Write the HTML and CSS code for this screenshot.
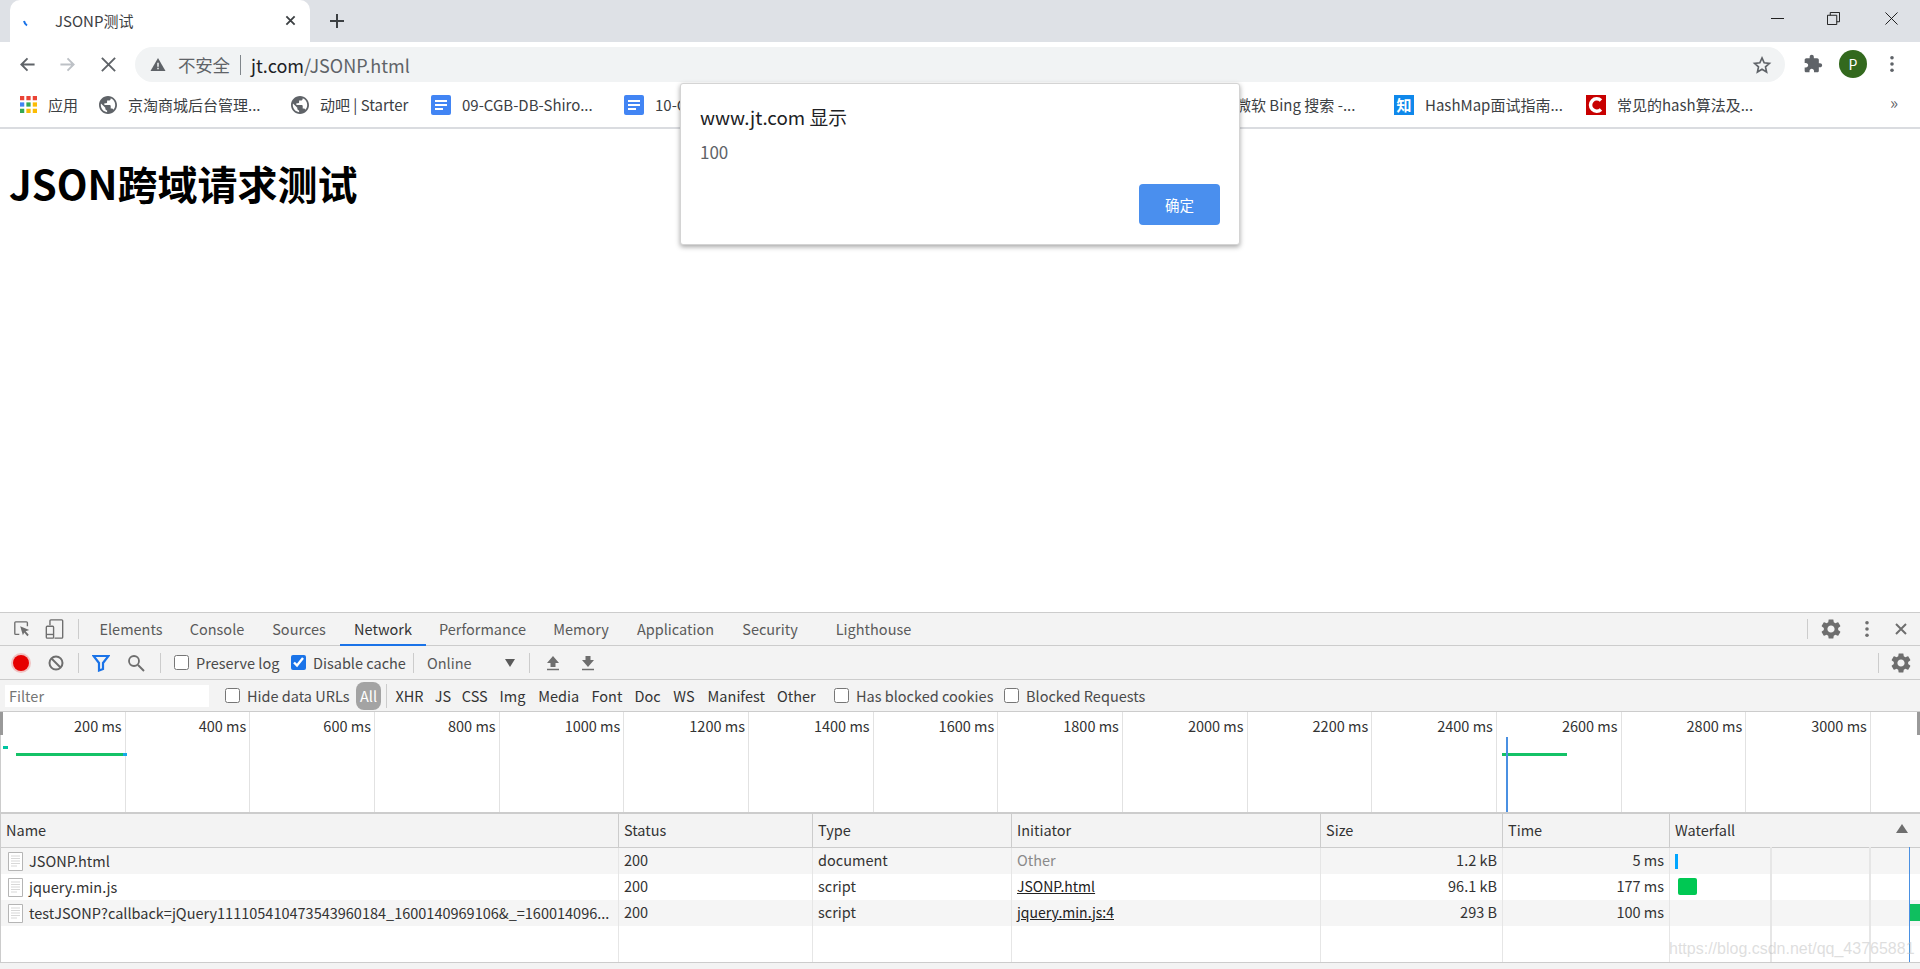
FILE: index.html
```html
<!DOCTYPE html>
<html lang="zh-CN">
<head>
<meta charset="utf-8">
<title>JSONP测试</title>
<link rel="stylesheet" href="styles.css">
</head>
<body>
<div class="browser">
  <header class="tabstrip">
    <div class="tab">
      <svg class="spinner" viewBox="0 0 8 8"><path d="M1 1 C1.5 3 2.5 4.5 4 5.5" fill="none" stroke="#1a73e8" stroke-width="2"/></svg>
      <span class="tab-title">JSONP测试</span>
      <svg class="tab-close" viewBox="0 0 12 12"><path d="M1.5 1.5l9 9M10.5 1.5l-9 9" stroke="#3c4043" stroke-width="2"/></svg>
    </div>
    <svg class="new-tab" viewBox="0 0 16 16"><path d="M8 1v14M1 8h14" stroke="#3c4043" stroke-width="2"/></svg>
    <div class="win-controls">
      <svg class="win win-min" viewBox="0 0 14 14"><path d="M0 7h14" stroke="#111" stroke-width="1"/></svg>
      <svg class="win win-max" viewBox="0 0 14 14"><path d="M.5 3.5h10v10H.5zM3.5 3.5V.5h10v10h-3" fill="none" stroke="#111" stroke-width="1"/></svg>
      <svg class="win win-close" viewBox="0 0 14 14"><path d="M.5.5l13 13M13.500.5l-13 13" stroke="#111" stroke-width="1"/></svg>
    </div>
  </header>

  <div class="toolbar">
    <svg class="nav nav-back" viewBox="0 0 18 18"><path d="M16.500 9H3M9 2.500L2.500 9 9 15.500" fill="none" stroke="#5f6368" stroke-width="2"/></svg>
    <svg class="nav nav-fwd" viewBox="0 0 18 18"><path d="M1.500 9H15M9 2.500L15.500 9 9 15.500" fill="none" stroke="#bdc1c6" stroke-width="2"/></svg>
    <svg class="nav nav-stop" viewBox="0 0 18 18"><path d="M2 2l14 14M16 2L2 16" stroke="#5f6368" stroke-width="2"/></svg>
    <div class="omnibox">
      <svg class="warn" viewBox="0 0 16 16"><path d="M8 1L16 15H0z" fill="#5f6368"/><path d="M7.200 6h1.600v4.500H7.200zM7.200 11.500h1.600V13H7.200z" fill="#f1f3f4"/></svg>
      <span class="insecure">不安全</span>
      <span class="omni-sep"></span>
      <span class="url"><span class="url-host">jt.com</span>/JSONP.html</span>
      <svg class="star" viewBox="0 0 24 24"><path d="M12 3.500l2.600 5.800 6.300.7-4.700 4.200 1.300 6.200L12 17.200l-5.500 3.200 1.300-6.200L3.100 10l6.300-.7z" fill="none" stroke="#5f6368" stroke-width="2"/></svg>
    </div>
    <svg class="puzzle" viewBox="0 0 24 24"><path fill="#5f6368" d="M20.500 11H19V7c0-1.100-.9-2-2-2h-4V3.500C13 2.120 11.880 1 10.500 1S8 2.120 8 3.500V5H4c-1.100 0-1.990.9-1.990 2v3.800H3.500c1.490 0 2.700 1.210 2.700 2.700s-1.210 2.700-2.700 2.700H2V20c0 1.100.9 2 2 2h3.800v-1.500c0-1.490 1.210-2.700 2.700-2.700 1.490 0 2.700 1.210 2.700 2.700V22H17c1.100 0 2-.9 2-2v-4h1.500c1.380 0 2.500-1.120 2.500-2.500S21.880 11 20.500 11z"/></svg>
    <span class="avatar">P</span>
    <svg class="menu-dots" viewBox="0 0 6 20"><circle cx="3" cy="3" r="2" fill="#5f6368"/><circle cx="3" cy="10" r="2" fill="#5f6368"/><circle cx="3" cy="17" r="2" fill="#5f6368"/></svg>
  </div>

  <nav class="bookmarks">
    <div class="bm bm-apps">
      <svg class="bm-icon" viewBox="0 0 16 16">
        <g fill="#ea4335"><rect width="4" height="4"/><rect x="6" width="4" height="4"/><rect x="12" width="4" height="4"/></g>
        <g><rect y="6" width="4" height="4" fill="#4285f4"/><rect x="6" y="6" width="4" height="4" fill="#34a853"/><rect x="12" y="6" width="4" height="4" fill="#fbbc05"/></g>
        <g><rect y="12" width="4" height="4" fill="#34a853"/><rect x="6" y="12" width="4" height="4" fill="#fbbc05"/><rect x="12" y="12" width="4" height="4" fill="#fbbc05"/></g>
      </svg><span>应用</span>
    </div>
    <div class="bm bm-jt"><svg class="bm-icon" viewBox="2 2 20 20"><use href="#globe"/></svg><span>京淘商城后台管理...</span></div>
    <div class="bm bm-dong"><svg class="bm-icon" viewBox="2 2 20 20"><use href="#globe"/></svg><span>动吧 | Starter</span></div>
    <div class="bm bm-doc1"><svg class="bm-icon" viewBox="0 0 20 20"><use href="#docs"/></svg><span>09-CGB-DB-Shiro...</span></div>
    <div class="bm bm-doc2"><svg class="bm-icon" viewBox="0 0 20 20"><use href="#docs"/></svg><span>10-CGB-DB-Shiro...</span></div>
    <div class="bm bm-bing"><svg class="bm-icon" viewBox="2 2 20 20"><use href="#globe"/></svg><span>微软 Bing 搜索 -...</span></div>
    <div class="bm bm-zhi"><span class="zhi">知</span><span>HashMap面试指南...</span></div>
    <div class="bm bm-c"><svg class="bm-icon" viewBox="0 0 20 20"><rect width="20" height="20" fill="#c80000"/><path d="M15 5.500A6.200 6.200 0 1 0 15 14.500" fill="none" stroke="#fff" stroke-width="3.500"/></svg><span>常见的hash算法及...</span></div>
    <span class="bm-more">»</span>
  </nav>

  <main class="page">
    <h1>JSON跨域请求测试</h1>
  </main>

  <section class="devtools">
    <div class="dt-tabs">
      <svg class="dt-ic dt-inspect" viewBox="0 0 20 20"><path d="M7 16H3a1 1 0 0 1-1-1V3a1 1 0 0 1 1-1h12a1 1 0 0 1 1 1v4" fill="none" stroke="#6e6e6e" stroke-width="1.500"/><path d="M8 7l10 4-4 1.500 3.500 4-1.500 1.500-3.500-4L11 17z" fill="#6e6e6e"/></svg>
      <svg class="dt-ic dt-device" viewBox="0 0 20 22"><path d="M5 7V2a1 1 0 0 1 1-1h12a1 1 0 0 1 1 1v18a1 1 0 0 1-1 1H10" fill="none" stroke="#6e6e6e" stroke-width="1.500"/><rect x="1" y="8" width="8" height="13" rx="1" fill="none" stroke="#6e6e6e" stroke-width="1.500"/><path d="M1 17h8" stroke="#6e6e6e" stroke-width="1.500"/></svg>
      <span class="vsep vsep-tabs"></span>
      <span class="dt-tab t-elements">Elements</span>
      <span class="dt-tab t-console">Console</span>
      <span class="dt-tab t-sources">Sources</span>
      <span class="dt-tab t-network is-active">Network</span>
      <span class="dt-tab t-performance">Performance</span>
      <span class="dt-tab t-memory">Memory</span>
      <span class="dt-tab t-application">Application</span>
      <span class="dt-tab t-security">Security</span>
      <span class="dt-tab t-lighthouse">Lighthouse</span>
      <span class="vsep vsep-right"></span>
      <svg class="dt-ic dt-gear" viewBox="2 2 20 20"><use href="#gear"/></svg>
      <svg class="dt-ic dt-more" viewBox="0 0 6 20"><circle cx="3" cy="3" r="2" fill="#6e6e6e"/><circle cx="3" cy="10" r="2" fill="#6e6e6e"/><circle cx="3" cy="17" r="2" fill="#6e6e6e"/></svg>
      <svg class="dt-ic dt-close" viewBox="0 0 12 12"><path d="M1 1l10 10M11 1L1 11" stroke="#6e6e6e" stroke-width="2"/></svg>
    </div>

    <div class="dt-toolbar">
      <span class="tool tool-record"><span class="rec"></span></span>
      <svg class="dt-ic tool-clear" viewBox="0 0 16 16"><circle cx="8" cy="8" r="6.500" fill="none" stroke="#6e6e6e" stroke-width="2"/><path d="M3.500 3.500l9 9" stroke="#6e6e6e" stroke-width="2"/></svg>
      <span class="vsep vsep-a"></span>
      <svg class="dt-ic tool-filter" viewBox="0 0 18 18"><path d="M1.500 2h15L11 9v6l-4 1.500V9z" fill="none" stroke="#1a73e8" stroke-width="2.200"/></svg>
      <svg class="dt-ic tool-search" viewBox="0 0 18 18"><circle cx="7" cy="7" r="5" fill="none" stroke="#6e6e6e" stroke-width="1.800"/><path d="M11 11l6 6" stroke="#6e6e6e" stroke-width="2"/></svg>
      <span class="vsep vsep-b"></span>
      <label class="chk chk-preserve"><input type="checkbox">Preserve log</label>
      <label class="chk chk-cache"><input type="checkbox" checked>Disable cache</label>
      <span class="vsep vsep-c"></span>
      <span class="throttle">Online</span>
      <span class="caret"></span>
      <span class="vsep vsep-d"></span>
      <svg class="dt-ic tool-up" viewBox="0 0 14 16"><path d="M7 1l6 7H9.500v4h-5V8H1z" fill="#6e6e6e"/><path d="M1 14.500h12" stroke="#6e6e6e" stroke-width="1.500"/></svg>
      <svg class="dt-ic tool-down" viewBox="0 0 14 16"><path d="M7 12l6-7H9.500V1h-5v4H1z" fill="#6e6e6e"/><path d="M1 14.500h12" stroke="#6e6e6e" stroke-width="1.500"/></svg>
      <span class="vsep vsep-e"></span>
      <svg class="dt-ic tool-gear" viewBox="2 2 20 20"><use href="#gear"/></svg>
    </div>

    <div class="dt-filter">
      <input class="filter-input" type="text" placeholder="Filter">
      <label class="chk chk-hide"><input type="checkbox">Hide data URLs</label>
      <span class="pill">All</span>
      <span class="vsep vsep-f"></span>
      <div class="chips">
        <span>XHR</span><span>JS</span><span>CSS</span><span>Img</span><span>Media</span><span>Font</span><span>Doc</span><span>WS</span><span>Manifest</span><span>Other</span>
      </div>
      <label class="chk chk-cookies"><input type="checkbox">Has blocked cookies</label>
      <label class="chk chk-blocked"><input type="checkbox">Blocked Requests</label>
    </div>

    <div class="overview">
      <span>200 ms</span><span>400 ms</span><span>600 ms</span><span>800 ms</span><span>1000 ms</span><span>1200 ms</span><span>1400 ms</span><span>1600 ms</span><span>1800 ms</span><span>2000 ms</span><span>2200 ms</span><span>2400 ms</span><span>2600 ms</span><span>2800 ms</span><span>3000 ms</span>
      <i class="ov ov-grip-l"></i>
      <i class="ov ov-tick"></i>
      <i class="ov ov-line1"></i>
      <i class="ov ov-line1-end"></i>
      <i class="ov ov-line2"></i>
      <i class="ov ov-mark"></i>
      <i class="ov ov-grip-r"></i>
    </div>

    <div class="net">
      <div class="net-row net-head">
        <div>Name</div><div>Status</div><div>Type</div><div>Initiator</div><div>Size</div><div>Time</div>
        <div class="wf-head">Waterfall<span class="sort"></span></div>
      </div>
      <div class="net-row net-odd">
        <div class="name"><svg class="file" viewBox="0 0 15 19"><use href="#file"/></svg>JSONP.html</div><div>200</div><div>document</div><div class="muted">Other</div><div class="num">1.2 kB</div><div class="num">5 ms</div><div class="wf"><i class="bar bar-a"></i></div>
      </div>
      <div class="net-row">
        <div class="name"><svg class="file" viewBox="0 0 15 19"><use href="#file"/></svg>jquery.min.js</div><div>200</div><div>script</div><div class="link">JSONP.html</div><div class="num">96.1 kB</div><div class="num">177 ms</div><div class="wf"><i class="bar bar-b"></i></div>
      </div>
      <div class="net-row net-odd">
        <div class="name"><svg class="file" viewBox="0 0 15 19"><use href="#file"/></svg>testJSONP?callback=jQuery111105410473543960184_1600140969106&amp;_=160014096...</div><div>200</div><div>script</div><div class="link">jquery.min.js:4</div><div class="num">293 B</div><div class="num">100 ms</div><div class="wf"><i class="bar bar-c"></i></div>
      </div>
      <div class="net-row net-fill">
        <div></div><div></div><div></div><div></div><div></div><div></div><div class="wf"></div>
      </div>
      <i class="wf-line wf-line-1"></i>
      <i class="wf-line wf-line-2"></i>
      <i class="wf-line wf-line-dcl"></i>
      <span class="watermark">https://blog.csdn.net/qq_43765881</span>
    </div>
    <div class="dt-status"></div>
  </section>

  <div class="alert" role="alertdialog">
    <div class="alert-title">www.jt.com 显示</div>
    <div class="alert-msg">100</div>
    <div class="alert-actions"><button class="alert-ok" type="button">确定</button></div>
  </div>
</div>

<svg class="defs" aria-hidden="true">
  <defs>
    <path id="globe" fill="#5f6368" d="M12 2C6.480 2 2 6.480 2 12s4.480 10 10 10 10-4.480 10-10S17.520 2 12 2zm-1 17.930c-3.950-.49-7-3.850-7-7.930 0-.62.08-1.210.21-1.790L9 15v1c0 1.100.9 2 2 2v1.930zm6.900-2.540c-.26-.81-1-1.390-1.900-1.390h-1v-3c0-.55-.45-1-1-1H8v-2h2c.55 0 1-.45 1-1V7h2c1.100 0 2-.9 2-2v-.41c2.930 1.190 5 4.060 5 7.410 0 2.080-.8 3.970-2.100 5.390z"/>
    <g id="docs"><rect width="20" height="20" rx="2" fill="#4285f4"/><path d="M4 5h12v2H4zM4 9h12v2H4zM4 13h8v2H4z" fill="#fff"/></g>
    <path id="gear" fill="#6e6e6e" d="M19.140 12.940c.04-.3.06-.61.06-.94 0-.32-.02-.64-.07-.94l2.030-1.580c.18-.14.23-.41.12-.61l-1.920-3.320c-.12-.22-.37-.29-.59-.22l-2.390.96c-.5-.38-1.030-.7-1.620-.94l-.36-2.540c-.04-.24-.24-.41-.48-.41h-3.840c-.24 0-.43.17-.47.41l-.36 2.540c-.59.24-1.130.57-1.620.94l-2.390-.96c-.22-.08-.47 0-.59.22L2.740 8.870c-.12.21-.08.47.12.61l2.030 1.580c-.05.3-.09.63-.09.94s.02.64.07.94l-2.030 1.580c-.18.14-.23.41-.12.61l1.920 3.320c.12.22.37.29.59.22l2.390-.96c.5.38 1.030.7 1.620.94l.36 2.540c.05.24.24.41.48.41h3.840c.24 0 .44-.17.47-.41l.36-2.540c.59-.24 1.130-.56 1.620-.94l2.390.96c.22.08.47 0 .59-.22l1.920-3.320c.12-.22.07-.47-.12-.61l-2.010-1.580zM12 15.600c-1.980 0-3.600-1.620-3.600-3.600s1.620-3.600 3.600-3.600 3.600 1.620 3.600 3.600-1.620 3.600-3.600 3.600z"/>
    <g id="file"><path d="M.5.5h14v18H.5z" fill="#fff" stroke="#b5b5b5"/><path d="M3 4h9M3 6.500h9M3 9h9M3 11.500h9M3 14h6" stroke="#d8d8d8" stroke-width="1.200"/></g>
  </defs>
</svg>
</body>
</html>
```
FILE: styles.css
```css
* { box-sizing: border-box; }
html, body { margin: 0; padding: 0; height: 969px; overflow: hidden; background: #fff; }
body { font-family: "Noto Sans CJK SC", "Noto Sans", sans-serif; font-size: 15px; color: #303942; }
.defs { width: 0; height: 0; position: absolute; }
svg { display: block; flex: none; }

.browser { position: relative; display: flex; flex-direction: column; width: 1920px; height: 969px; }

/* Tab strip */
.tabstrip { flex: none; height: 42px; background: #dee1e6; display: flex; align-items: center; padding-left: 10px; }
.tab { width: 300px; height: 42px; align-self: flex-end; background: #fff; border-radius: 10px 10px 0 0; display: flex; align-items: center; padding-left: 13px; padding-bottom: 2px; }
.spinner { width: 8px; height: 8px; margin-top: 8px; }
.tab-title { margin-left: 24px; width: 230px; font-size: 15px; color: #3c4043; }
.tab-close { width: 11px; height: 11px; }
.new-tab { width: 16px; height: 16px; margin-left: 19px; }
.win-controls { margin-left: auto; display: flex; align-items: center; padding-right: 22px; padding-bottom: 6px; }
.win { width: 13px; height: 13px; }
.win-min { margin-right: 43px; }
.win-max { margin-right: 45px; }

/* Toolbar */
.toolbar { flex: none; height: 40px; display: flex; align-items: flex-start; padding: 5px 0 0 19px; }
.nav { width: 17px; height: 17px; margin-top: 9px; }
.nav-fwd { margin-left: 23px; }
.nav-stop { margin-left: 24px; }
.omnibox { margin-left: 18px; width: 1650px; height: 35px; background: #f1f3f4; border-radius: 18px; display: flex; align-items: center; padding-left: 15px; font-size: 18px; }
.warn { width: 16px; height: 15px; }
.insecure { margin-left: 12px; width: 56px; font-size: 17.500px; color: #5f6368; white-space: nowrap; letter-spacing: -.2px; }
.omni-sep { width: 1px; height: 20px; background: #80868b; margin-left: 6px; }
.url { margin-left: 10px; color: #5f6368; font-size: 18px; white-space: nowrap; }
.url-host { color: #202124; }
.star { width: 20px; height: 20px; margin-left: auto; margin-right: 13px; }
.puzzle { width: 20px; height: 20px; margin: 7px 0 0 18px; }
.avatar { width: 28px; height: 28px; margin: 3px 0 0 16px; border-radius: 50%; background: #33691e; color: #fff; font-size: 14px; display: flex; align-items: center; justify-content: center; }
.menu-dots { width: 6px; height: 18px; margin: 8px 0 0 22px; }

/* Bookmarks */
.bookmarks { flex: none; height: 47px; border-bottom: 2px solid #dadce0; display: flex; align-items: center; padding-left: 20px; font-size: 15px; color: #3c4043; white-space: nowrap; }
.bm { display: flex; align-items: center; gap: 11px; flex: none; }
.bm-icon { width: 20px; height: 20px; }
.bm-apps { width: 79px; }
.bm-apps .bm-icon { width: 17px; height: 17px; }
.bm-jt { width: 192px; }
.bm-jt .bm-icon, .bm-dong .bm-icon, .bm-bing .bm-icon { width: 18px; height: 18px; }
.bm-dong { width: 140px; }
.bm-doc1 { width: 193px; }
.bm-doc2 { width: 583px; }
.bm-bing { width: 187px; }
.bm-zhi { width: 192px; }
.bm-c { width: 304px; }
.zhi { width: 20px; height: 20px; background: #0f88eb; color: #fff; font-size: 15px; line-height: 20px; text-align: center; font-weight: 700; }
.bm-more { font-size: 17px; color: #5f6368; line-height: 1; margin-top: -6px; }

/* Page */
.page { flex: 1 1 auto; min-height: 0; }
h1 { margin: 0; padding: 26px 0 0 9px; font-size: 40px; line-height: 56px; font-weight: 700; color: #000; }

/* DevTools */
.devtools { flex: none; height: 357px; border-top: 1px solid #ccc; background: #f3f3f3; display: flex; flex-direction: column; color: #333; font-size: 15px; }
.dt-tabs { flex: none; height: 33px; display: flex; align-items: center; border-bottom: 1px solid #ccc; padding-left: 13px; }
.dt-ic { flex: none; }
.dt-inspect { width: 18px; height: 18px; }
.dt-device { width: 19px; height: 20px; margin-left: 14px; }
.vsep { flex: none; width: 1px; height: 20px; background: #ccc; }
.vsep-tabs { margin-left: 14px; margin-right: 7px; }
.dt-tab { flex: none; height: 33px; line-height: 32px; text-align: center; color: #5a5a5a; font-size: 14.500px; }
.t-elements { width: 90px; }
.t-console { width: 82px; }
.t-sources { width: 82px; }
.t-network { width: 86px; }
.t-performance { width: 113px; }
.t-memory { width: 84px; }
.t-application { width: 105px; }
.t-security { width: 94px; margin-left: -5px; margin-right: 5px; }
.t-lighthouse { width: 103px; }
.is-active { color: #333; border-bottom: 2px solid #1a73e8; }
.vsep-right { margin-left: 882px; }
.dt-gear { width: 20px; height: 20px; margin-left: 13px; }
.dt-more { width: 6px; height: 18px; margin-left: 23px; }
.dt-close { width: 12px; height: 12px; margin-left: 25px; }

.dt-toolbar { flex: none; height: 34px; display: flex; align-items: center; border-bottom: 1px solid #ccc; }
.tool-record { flex: none; width: 40px; display: flex; justify-content: center; padding-left: 1px; }
.rec { width: 16px; height: 16px; border-radius: 50%; background: #e60000; box-shadow: 0 0 0 2px rgba(230,0,0,.2); }
.tool-clear { width: 16px; height: 16px; margin-left: 8px; }
.vsep-a { margin-left: 14px; }
.tool-filter { width: 18px; height: 18px; margin-left: 13px; }
.tool-search { width: 18px; height: 18px; margin-left: 17px; }
.vsep-b { margin-left: 15px; }
.chk { flex: none; display: flex; align-items: center; gap: 7px; white-space: nowrap; color: #4a4a4a; font-size: 14.500px; }
.chk input { width: 15px; height: 15px; margin: 0; flex: none; accent-color: #1a73e8; }
.chk-preserve { margin-left: 13px; width: 117px; }
.chk-cache { width: 122px; }
.throttle { flex: none; width: 91px; padding-left: 13px; font-size: 14.500px; color: #5a5a5a; }
.caret { flex: none; width: 0; height: 0; border: 5px solid transparent; border-top: 8px solid #5a5a5a; border-bottom: 0; }
.vsep-d { margin-left: 14px; }
.tool-up { width: 14px; height: 16px; margin-left: 16px; }
.tool-down { width: 14px; height: 16px; margin-left: 21px; }
.vsep-e { margin-left: 1283px; }
.tool-gear { width: 20px; height: 20px; margin-left: 12px; }

.dt-filter { flex: none; height: 32px; display: flex; align-items: center; border-bottom: 1px solid #ccc; }
.filter-input { flex: none; width: 204px; height: 22px; margin-left: 5px; border: 0; padding: 0 4px; background: #fff; font: inherit; font-size: 14.500px; outline: 0; }
.filter-input::placeholder { color: #757575; }
.chk-hide { margin-left: 16px; width: 131px; }
.pill { flex: none; width: 25px; height: 28px; border-radius: 8px; background: #a3a3a3; color: #fff; text-align: center; line-height: 27px; font-size: 14.500px; }
.vsep-f { margin-left: 5px; height: 24px; }
.chips { display: flex; margin-left: 2px; font-size: 14.500px; color: #333; }
.chips span { flex: none; text-align: center; }
.chips span:nth-child(1) { width: 41px; }
.chips span:nth-child(2) { width: 26px; }
.chips span:nth-child(3) { width: 37.500px; }
.chips span:nth-child(4) { width: 38px; }
.chips span:nth-child(5) { width: 54.500px; }
.chips span:nth-child(6) { width: 42px; }
.chips span:nth-child(7) { width: 39px; }
.chips span:nth-child(8) { width: 34px; }
.chips span:nth-child(9) { width: 70.500px; }
.chips span:nth-child(10) { width: 49.500px; }
.chk-cookies { margin-left: 13px; width: 170px; }

.overview { position: relative; flex: none; height: 100px; background: #fff; border-left: 1px solid #ccc; display: grid; grid-template-columns: repeat(16, 124.660px); grid-auto-rows: 100%; margin-left: 0; }
.overview > span { border-right: 1px solid #e2e2e2; text-align: right; padding: 4px 3px 0 0; font-size: 14.500px; line-height: 20px; color: #333; white-space: nowrap; }
.ov { position: absolute; display: block; }
.ov-grip-l { left: -1px; top: 0; width: 3px; height: 23px; background: #999; }
.ov-tick { left: 2px; top: 34px; width: 5px; height: 3px; background: #00c4a0; }
.ov-line1 { left: 15px; top: 41px; width: 108px; height: 3px; background: #14c267; }
.ov-line1-end { left: 122px; top: 41px; width: 4px; height: 3px; background: #14a9e8; }
.ov-line2 { left: 1501px; top: 41px; width: 65px; height: 3px; background: #14c267; }
.ov-mark { left: 1505px; top: 25px; width: 2px; height: 75px; background: #4a90e2; }
.ov-grip-r { left: 1916px; top: 0; width: 3px; height: 23px; background: #999; }

.net { position: relative; flex: 1 1 auto; background: #fff; border-top: 2px solid #ccc; border-left: 1px solid #ccc; font-size: 14.500px; color: #333; overflow: hidden; }
.net-row { display: grid; grid-template-columns: 618px 194px 199px 309px 182px 167px 250px; height: 26px; background: #fff; }
.net-row > div { padding: 0 5px; line-height: 24px; white-space: nowrap; overflow: hidden; border-right: 1px solid #e6e6e6; }
.net-odd { background: #f5f5f5; }
.net-head { height: 34px; background: #f3f3f3; border-bottom: 1px solid #ccc; }
.net-head > div { line-height: 31px; border-right-color: #ccc; }
.net-fill { height: 37px; }
.name { display: flex; align-items: center; gap: 6px; padding-left: 7px !important; }
.file { width: 15px; height: 19px; }
.num { text-align: right; }
.muted { color: #8a8a8a; }
.link { text-decoration: underline; color: #222; font-size: 14px; }
.wf-head { position: relative; border-right: 0 !important; }
.sort { position: absolute; right: 12px; top: 10px; width: 0; height: 0; border: 6px solid transparent; border-top: 0; border-bottom: 9px solid #6e6e6e; }
.wf { position: relative; border-right: 0 !important; overflow: visible !important; }
.bar { position: absolute; display: block; z-index: 1; }
.bar-a { left: 5px; top: 6px; width: 3px; height: 15px; background: #00a6ff; }
.bar-b { left: 8px; top: 4px; width: 19px; height: 17px; background: #00c853; border-radius: 2px; }
.bar-c { left: 240px; top: 4px; width: 11px; height: 17px; background: #0fbf5f; }
.wf-line { position: absolute; top: 33px; bottom: 0; width: 1px; background: #e6e6e6; }
.wf-line-1 { left: 1769px; width: 2px; }
.wf-line-2 { left: 1868px; width: 2px; }
.wf-line-dcl { left: 1908px; background: #4a90e2; }
.watermark { position: absolute; left: 1668px; top: 126px; font-family: "Liberation Sans", sans-serif; font-size: 16px; color: rgba(190,190,190,.5); white-space: nowrap; }
.dt-status { flex: none; height: 7px; border-top: 1px solid #ccc; background: #f3f3f3; }

/* JS alert */
.alert { position: absolute; left: 680px; top: 83px; width: 560px; height: 162px; background: #fff; border: 1px solid #d4d4d4; border-radius: 3px; box-shadow: 0 2px 5px rgba(0,0,0,.35); padding: 18px 20px 0 19px; display: flex; flex-direction: column; }
.alert-title { font-size: 18.750px; line-height: 30px; color: #202124; }
.alert-msg { margin-top: 8px; font-size: 17px; line-height: 24px; color: #5f6368; }
.alert-actions { display: flex; justify-content: flex-end; margin-top: 20px; margin-right: -1px; }
.alert-ok { width: 81px; height: 41px; border: 0; border-radius: 4px; background: #4a8fee; color: #fff; font: inherit; font-size: 14.500px; padding: 0; }
```
